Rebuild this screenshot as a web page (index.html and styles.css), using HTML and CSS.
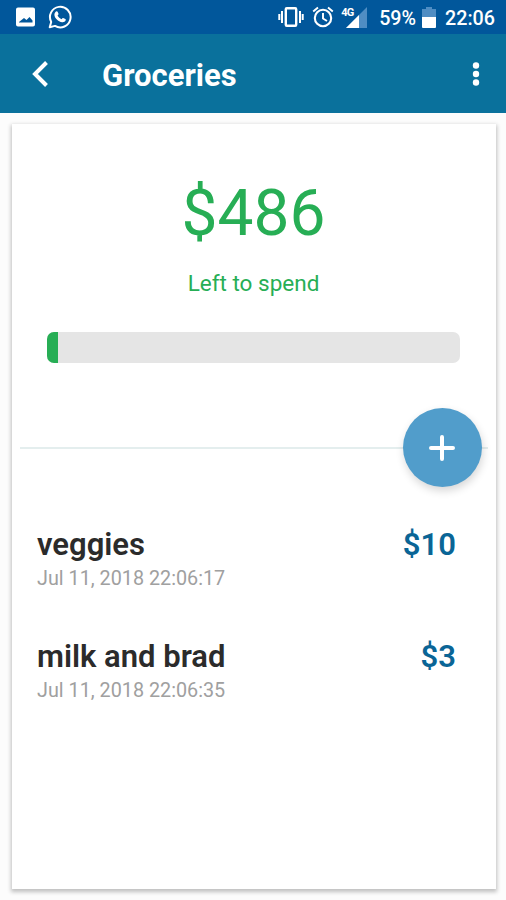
FILE: index.html
```html
<!DOCTYPE html>
<html lang="en">
<head>
    <meta charset="UTF-8">
    <meta name="viewport" content="width=device-width, initial-scale=1.0">
    <title>Groceries</title>
    <link rel="stylesheet" href="styles.css">
</head>
<body>
    <div class="status-bar">
        <svg class="icon-image" width="20" height="20" viewBox="0 0 20 20">
            <path fill="#fff" fill-rule="evenodd" d="M2 0.5h15a2 2 0 0 1 2 2v15a2 2 0 0 1-2 2H2a2 2 0 0 1-2-2v-15a2 2 0 0 1 2-2zM3 15.500h13.500v-2l-3-3.500-3 3-2.500-2-5 4z"/>
        </svg>
        <svg class="icon-chat" width="24" height="24" viewBox="0 0 24 24">
            <path fill="none" stroke="#fff" stroke-width="2" stroke-linejoin="round" d="M1.700 22.300l1.500-5.400A10.300 10.300 0 1 1 7 20.900z"/>
            <path fill="#fff" d="M8.500 6.300c.6-.2 1 .1 1.200.6l.8 1.900c.2.400 0 .8-.9 1.700.9 1.700 2.200 2.900 4 3.700.8-1 1.100-1.400 1.600-1.200l2.200 1.100c.5.300.4.900.2 1.500-.5 1.200-2.100 1.900-3.400 1.700-4.200-.8-7.400-4-7.800-7.300-.1-1.600.9-3.300 2.100-3.700z"/>
        </svg>
        <svg class="icon-vibrate" width="26" height="20" viewBox="0 0 26 20">
            <rect x="7.800" y="1.300" width="10.400" height="17.400" rx="1" fill="none" stroke="#fff" stroke-width="2.400"/>
            <path stroke="#fff" stroke-width="2" d="M4 4v12M22 4v12M1.300 7v6M24.700 7v6"/>
        </svg>
        <svg class="icon-alarm" width="22" height="22" viewBox="0 0 22 22">
            <circle cx="11" cy="12" r="8.200" fill="none" stroke="#fff" stroke-width="2.100"/>
            <path fill="none" stroke="#fff" stroke-width="1.900" d="M1.200 5.400L6 1.400M20.800 5.400L16 1.400M11 7v5.500l4 2.500"/>
        </svg>
        <div class="signal">
            <svg width="26" height="21" viewBox="0 0 26 21">
                <path fill="#4f8dc3" d="M26 0v21H5z"/>
                <path fill="#fff" d="M18 8v13H5z"/>
            </svg>
            <span class="network">4G</span>
        </div>
        <span class="battery-level">59%</span>
        <svg class="icon-battery" width="14" height="21" viewBox="0 0 14 21">
            <path fill="#4f8dc3" d="M4 0h6v2h4v8H0V2h4z"/>
            <path fill="#fff" d="M0 10h14v10a1 1 0 0 1-1 1H1a1 1 0 0 1-1-1z"/>
        </svg>
        <span class="clock">22:06</span>
    </div>

    <header>
        <svg class="back" width="18" height="26" viewBox="0 0 18 26">
            <path fill="none" stroke="#fff" stroke-width="4" d="M15.500 1.500L4 13l11.500 11.500"/>
        </svg>
        <h1>Groceries</h1>
        <svg class="more" width="8" height="26" viewBox="0 0 8 26">
            <circle cx="4" cy="4.500" r="3.200" fill="#fff"/>
            <circle cx="4" cy="13" r="3.200" fill="#fff"/>
            <circle cx="4" cy="21.500" r="3.200" fill="#fff"/>
        </svg>
    </header>

    <main class="card">
        <div class="summary">
            <p class="amount">$486</p>
            <p class="label">Left to spend</p>
            <div class="progress">
                <div class="progress-value" style="width: 2.7%"></div>
            </div>
        </div>
        <div class="divider">
            <button class="add-button" aria-label="Add">
                <svg width="26" height="26" viewBox="0 0 26 26">
                    <path stroke="#fff" stroke-width="4" stroke-linecap="round" d="M13 2v22M2 13h22"/>
                </svg>
            </button>
        </div>
        <ul class="expenses">
            <li>
                <div>
                    <h2>veggies</h2>
                    <p class="date">Jul 11, 2018 22:06:17</p>
                </div>
                <span class="price">$10</span>
            </li>
            <li>
                <div>
                    <h2>milk and brad</h2>
                    <p class="date">Jul 11, 2018 22:06:35</p>
                </div>
                <span class="price">$3</span>
            </li>
        </ul>
    </main>
</body>
</html>
```

FILE: styles.css
```css
* {
    margin: 0;
    padding: 0;
    box-sizing: border-box;
}
body {
    font-family: Roboto, "Liberation Sans", sans-serif;
    background: #fcfcfc;
    height: 900px;
    overflow: hidden;
}
svg {
    display: block;
    flex: none;
}
.status-bar {
    display: flex;
    align-items: center;
    height: 34px;
    padding: 0 11px 0 16px;
    background: #01579b;
    color: #fff;
    font-size: 19.7px;
    font-weight: 500;
    line-height: 32px;
}
.battery-level,
.clock {
    padding-top: 3px;
}
.icon-chat {
    margin-left: 12px;
}
.icon-vibrate {
    margin-left: auto;
}
.icon-alarm {
    margin-left: 8px;
}
.signal {
    position: relative;
    margin: 0 12px 0 7px;
}
.network {
    position: absolute;
    top: 0;
    left: 0;
    font-size: 11px;
    font-weight: 700;
    line-height: 11px;
    letter-spacing: -0.8px;
}
.icon-battery {
    margin: 0 9px 0 6px;
}
header {
    display: flex;
    align-items: center;
    height: 79px;
    padding: 0 26px 0 31px;
    background: #0a719c;
    color: #fff;
}
h1 {
    margin-left: 53px;
    padding-top: 3px;
    font-size: 31px;
    font-weight: 700;
}
.more {
    margin-left: auto;
}
.card {
    height: 765px;
    margin: 11px 10px 0 12px;
    background: #fff;
    box-shadow: 0 2px 4px 1px rgba(0, 0, 0, 0.24);
}
.summary {
    height: 323px;
    padding: 52px 36px 0 35px;
    text-align: center;
    color: #27ae55;
}
.amount {
    font-size: 64px;
    font-weight: 400;
    line-height: 76px;
}
.label {
    margin-top: 17px;
    font-size: 22.5px;
    line-height: 28px;
}
.progress {
    height: 31px;
    margin-top: 35px;
    background: #e5e5e5;
    border-radius: 7px;
    overflow: hidden;
}
.progress-value {
    height: 100%;
    background: #27ae55;
}
.divider {
    position: relative;
    height: 2px;
    margin: 0 8px;
    background: #e4eeee;
}
.add-button {
    position: absolute;
    top: -39px;
    right: 6.5px;
    display: flex;
    align-items: center;
    justify-content: center;
    width: 79px;
    height: 79px;
    background: #519dcb;
    border: none;
    border-radius: 50%;
    box-shadow: 1px 4px 9px rgba(0, 0, 0, 0.16);
}
.expenses {
    padding: 76px 40px 0 25px;
    list-style: none;
}
.expenses li {
    display: flex;
    justify-content: space-between;
    height: 112px;
}
h2 {
    color: #2b2b2b;
    font-size: 31px;
    font-weight: 600;
    line-height: 40px;
}
.date {
    margin-top: 1px;
    color: #a0a0a0;
    font-size: 19.8px;
    line-height: 26px;
}
.price {
    color: #0a6596;
    font-size: 31px;
    font-weight: 600;
    line-height: 40px;
}
```
